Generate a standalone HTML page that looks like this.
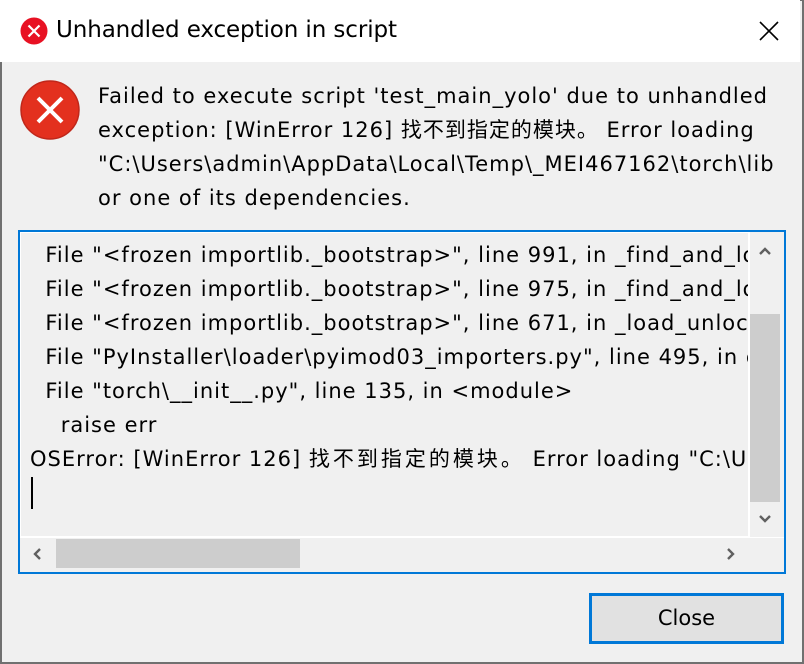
<!DOCTYPE html>
<html><head><meta charset="utf-8"><style>
*{margin:0;padding:0;box-sizing:border-box}
body{width:804px;height:664px;overflow:hidden;background:#f0f0f0;font-family:"DejaVu Sans","Noto Sans CJK SC",sans-serif;position:relative}
.win{position:absolute;left:0;top:0;width:804px;height:664px;border:2px solid #707070;border-top:1px solid #707070}
.title{position:absolute;left:0;top:0;width:800px;height:62px;background:#fff}
.tt{position:absolute;left:56px;top:17px;font-size:23px;letter-spacing:-0.1px;color:#000;white-space:nowrap}
.x{position:absolute;left:757px;top:19px}
.msg{position:absolute;left:98px;top:79px;font-size:21px;letter-spacing:1.0px;line-height:34px;color:#000;white-space:nowrap;width:684px;overflow:hidden}
.box{position:absolute;left:18px;top:230px;width:768px;height:344px;border:2px solid #0078d7;background:#fff}
.ta{position:absolute;left:1px;top:1px;width:727px;height:303px;background:#f0f0f0;overflow:hidden;font-size:21px;letter-spacing:1.0px;line-height:34px;white-space:pre;color:#000;padding:5px 0 0 9px}
.cjk{letter-spacing:3px}
.vs{position:absolute;left:730px;top:0;width:34px;height:305px;background:#f0f0f0}
.vt{position:absolute;left:0;top:82px;width:30px;height:188px;background:#cdcdcd}
.hs{position:absolute;left:0;top:306px;width:764px;height:34px;background:#f0f0f0}
.ht{position:absolute;left:36px;top:1px;width:244px;height:29px;background:#cdcdcd}
.btn{position:absolute;left:589px;top:593px;width:195px;height:51px;border:2px solid #0078d7;background:#e1e1e1;font-size:21px;text-align:center;line-height:46px;color:#000}
.btn:after{content:"";position:absolute;inset:0;border:1px solid #0078d7}
.cur{position:absolute;left:10px;top:244px;width:2px;height:32px;background:#000}
</style></head><body>
<div class="win"></div>
<div class="title">
<svg style="position:absolute;left:20px;top:17px" width="28" height="28"><circle cx="14" cy="14" r="13.5" fill="#e81123"/><path d="M8.5 8.5L19.5 19.5M19.5 8.5L8.5 19.5" stroke="#fff" stroke-width="2.2"/></svg>
<div class="tt">Unhandled exception in script</div>
<svg class="x" width="24" height="24"><path d="M3 3L21 21M21 3L3 21" stroke="#000" stroke-width="1.6"/></svg>
</div>
<svg style="position:absolute;left:20px;top:80px" width="60" height="60"><circle cx="30" cy="30" r="29" fill="#e3301e" stroke="#c0271a" stroke-width="1.5"/><path d="M18 18L42 42M42 18L18 42" stroke="#fff" stroke-width="4"/></svg>
<div class="msg">Failed to execute script 'test_main_yolo' due to unhandled<br>exception: [WinError 126] 找不到指定的模块。 Error loading<br>"C:\Users\admin\AppData\Local\Temp\_MEI467162\torch\lib<br>or one of its dependencies.</div>
<div class="box">
<div class="ta">  File "&lt;frozen importlib._bootstrap&gt;", line 991, in _find_and_load
  File "&lt;frozen importlib._bootstrap&gt;", line 975, in _find_and_load
  File "&lt;frozen importlib._bootstrap&gt;", line 671, in _load_unlocked
  File "PyInstaller\loader\pyimod03_importers.py", line 495, in exec
  File "torch\__init__.py", line 135, in &lt;module&gt;
    raise err
OSError: [WinError 126] <span class="cjk">找不到指定的模块。</span> Error loading "C:\Users"<div class="cur"></div></div>
<div class="vs"><div class="vt"></div>
<svg style="position:absolute;left:8px;top:14px" width="14" height="10"><path d="M2 8L7 3L12 8" stroke="#606060" stroke-width="2.4" fill="none"/></svg>
<svg style="position:absolute;left:8px;top:282px" width="14" height="10"><path d="M2 2L7 7L12 2" stroke="#606060" stroke-width="2.4" fill="none"/></svg>
</div>
<div class="hs"><div class="ht"></div>
<svg style="position:absolute;left:12px;top:9px" width="10" height="14"><path d="M8 2L3 7L8 12" stroke="#606060" stroke-width="2.4" fill="none"/></svg>
<svg style="position:absolute;left:706px;top:9px" width="10" height="14"><path d="M2 2L7 7L2 12" stroke="#606060" stroke-width="2.4" fill="none"/></svg>
</div>
</div>
<div class="btn">Close</div>
</body></html>
